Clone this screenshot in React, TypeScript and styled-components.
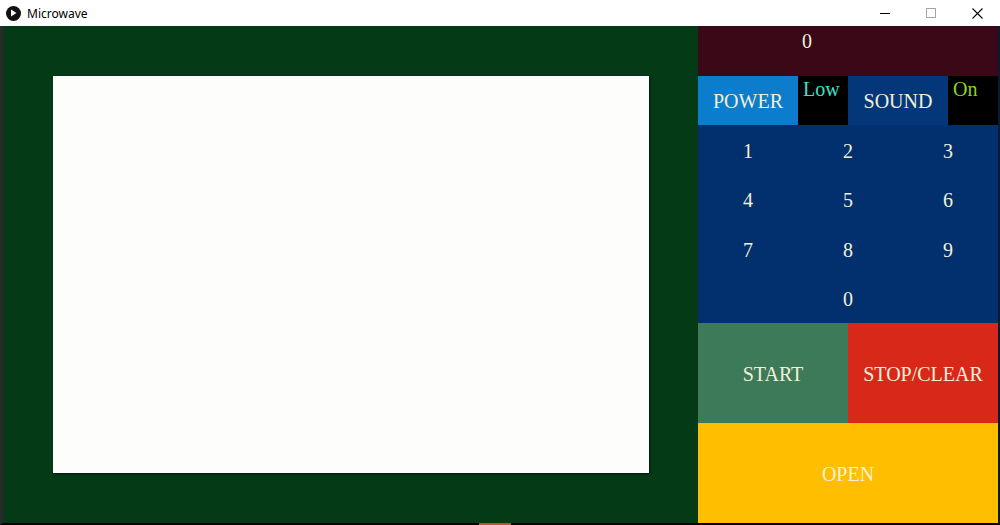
import React from "react";
import styled, { createGlobalStyle } from "styled-components";

const Global = createGlobalStyle`
  html, body { margin: 0; padding: 0; background: #000; }
  body { width: 1000px; height: 525px; overflow: hidden; }
`;

const Window = styled.div`
  width: 1000px;
  height: 525px;
  display: flex;
  flex-direction: column;
  background: #000;
  position: relative;
`;

const TitleBar = styled.div`
  height: 26px;
  background: #ffffff;
  display: flex;
  align-items: center;
  font-family: "Noto Sans", "Liberation Sans", sans-serif;
  font-size: 12px;
  color: #000;
`;

const AppIcon = styled.div`
  width: 15px;
  height: 15px;
  border-radius: 50%;
  background: #111;
  margin-left: 6px;
  margin-right: 6px;
  display: flex;
  align-items: center;
  justify-content: center;
`;

const Title = styled.span`
  flex: 1;
`;

const Ctrl = styled.div<{ $dim?: boolean }>`
  width: 46px;
  height: 26px;
  display: flex;
  align-items: center;
  justify-content: center;
  opacity: ${(p) => (p.$dim ? 0.35 : 1)};
`;

const Body = styled.div`
  flex: 1;
  display: flex;
  border-left: 3px solid #2a2a2a;
  border-right: 2px solid #0a1a30;
  border-bottom: 2px solid #000;
`;

const Oven = styled.div`
  width: 645px;
  padding: 50px 0 0 50px;
  background: #053a16;
`;

const Door = styled.div`
  width: 596px;
  height: 397px;
  background: #fdfdfb;
  box-shadow: 1px 1px 2px rgba(0, 0, 0, 0.6);
`;

const Panel = styled.div`
  width: 300px;
  display: flex;
  flex-direction: column;
  font-family: "Liberation Serif", "DejaVu Serif", serif;
  font-size: 20px;
  color: #f2f0d8;
`;

const Display = styled.div`
  height: 50px;
  background: #3a0816;
  padding: 3px 0 0 104px;
  box-sizing: border-box;
  line-height: 24px;
`;

const Row = styled.div`
  height: 49px;
  display: flex;
`;

const Btn = styled.div<{ $bg: string; $w: number }>`
  width: ${(p) => p.$w}px;
  background: ${(p) => p.$bg};
  display: flex;
  align-items: center;
  justify-content: center;
  padding-top: 2px;
  box-sizing: border-box;
`;

const Value = styled.div<{ $color: string }>`
  width: 50px;
  background: #000;
  color: ${(p) => p.$color};
  padding: 1px 0 0 5px;
  box-sizing: border-box;
  line-height: 24px;
`;

const Pad = styled.div`
  height: 198px;
  background: #02306e;
  display: grid;
  grid-template-columns: 100px 100px 100px;
  grid-template-rows: repeat(4, 49.5px);
`;

const Key = styled.div<{ $col?: number }>`
  display: flex;
  align-items: center;
  justify-content: center;
  padding-top: 3px;
  ${(p) => (p.$col ? `grid-column: ${p.$col};` : "")}
`;

const Big = styled.div<{ $bg: string; $w?: number }>`
  height: 100px;
  width: ${(p) => (p.$w ? `${p.$w}px` : "auto")};
  flex: ${(p) => (p.$w ? "none" : 1)};
  background: ${(p) => p.$bg};
  display: flex;
  align-items: center;
  justify-content: center;
  padding-top: 2px;
  box-sizing: border-box;
`;

const BigRow = styled.div`
  display: flex;
`;

const Taskbit = styled.div`
  position: absolute;
  left: 479px;
  bottom: 0;
  width: 32px;
  height: 2px;
  background: #c05030;
`;

export default function App() {
  const keys = ["1", "2", "3", "4", "5", "6", "7", "8", "9"];
  return (
    <>
      <Global />
      <Window>
        <TitleBar>
          <AppIcon>
            <svg width="7" height="8" viewBox="0 0 7 8">
              <path d="M1 0.5 L6.5 4 L1 7.5 Z" fill="#fff" />
            </svg>
          </AppIcon>
          <Title>Microwave</Title>
          <Ctrl>
            <svg width="10" height="10" viewBox="0 0 10 10">
              <path d="M0 5.5 H10" stroke="#000" strokeWidth="1" />
            </svg>
          </Ctrl>
          <Ctrl $dim>
            <svg width="10" height="10" viewBox="0 0 10 10">
              <rect x="0.5" y="0.5" width="9" height="9" fill="none" stroke="#000" strokeWidth="1" />
            </svg>
          </Ctrl>
          <Ctrl>
            <svg width="11" height="11" viewBox="0 0 11 11">
              <path d="M0.5 0.5 L10.5 10.5 M10.5 0.5 L0.5 10.5" stroke="#000" strokeWidth="1.1" />
            </svg>
          </Ctrl>
        </TitleBar>
        <Body>
          <Oven>
            <Door />
          </Oven>
          <Panel>
            <Display>0</Display>
            <Row>
              <Btn $bg="#0c7ccc" $w={100}>POWER</Btn>
              <Value $color="#3ee0c8">Low</Value>
              <Btn $bg="#04377a" $w={100}>SOUND</Btn>
              <Value $color="#8cd420">On</Value>
            </Row>
            <Pad>
              {keys.map((k) => (
                <Key key={k}>{k}</Key>
              ))}
              <Key $col={2}>0</Key>
            </Pad>
            <BigRow>
              <Big $bg="#3c7a5a" $w={150}>START</Big>
              <Big $bg="#d8281a">STOP/CLEAR</Big>
            </BigRow>
            <Big $bg="#ffbe00">OPEN</Big>
          </Panel>
        </Body>
        <Taskbit />
      </Window>
    </>
  );
}
